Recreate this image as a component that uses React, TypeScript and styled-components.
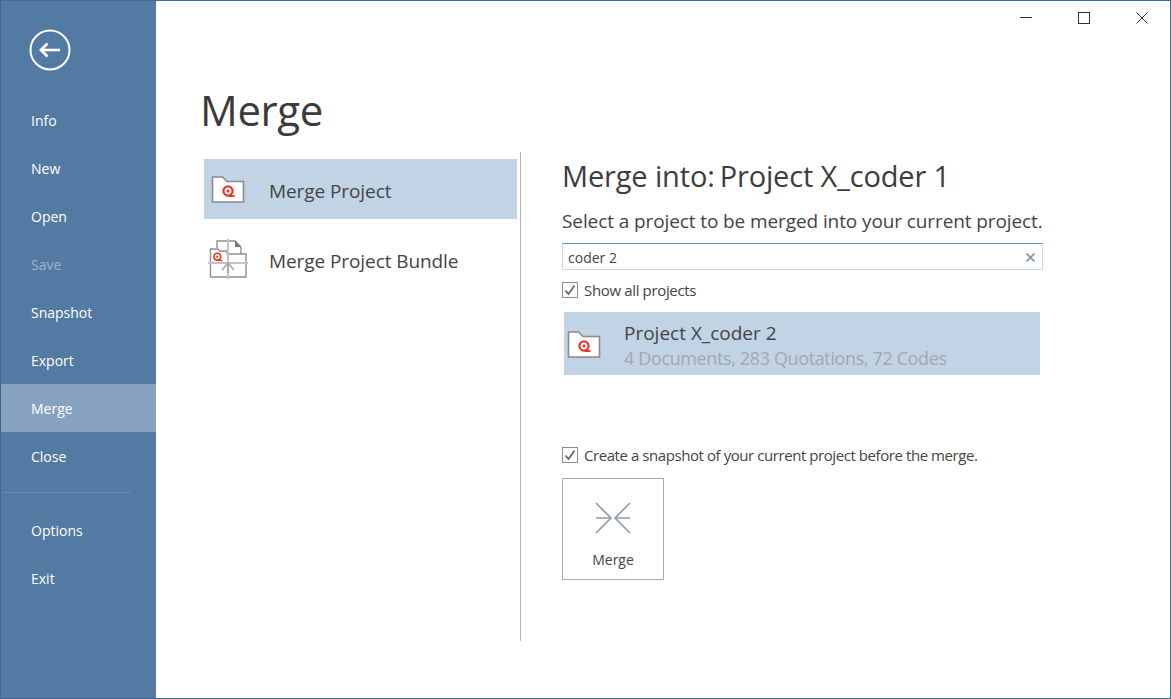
import React from 'react';
import styled, { createGlobalStyle } from 'styled-components';

const GlobalStyle = createGlobalStyle`
  html, body {
    margin: 0;
    padding: 0;
    background: #fff;
  }
  body {
    font-family: "Open Sans", "Noto Sans", sans-serif;
  }
`;

const Window = styled.div`
  box-sizing: border-box;
  width: 1171px;
  height: 699px;
  display: flex;
  border: 1px solid #41688f;
  overflow: hidden;
`;

const Sidebar = styled.nav`
  width: 155px;
  flex: none;
  background: #527aa3;
  display: flex;
  flex-direction: column;
`;

const BackButton = styled.div`
  height: 95px;
  padding-left: 28px;
  padding-top: 28px;
  box-sizing: border-box;
`;

const NavItem = styled.div<{ $active?: boolean; $disabled?: boolean }>`
  height: 48px;
  display: flex;
  align-items: center;
  padding-left: 30px;
  font-size: 14px;
  letter-spacing: 0;
  color: ${({ $disabled }) => ($disabled ? '#9db3cb' : '#fff')};
  background: ${({ $active }) => ($active ? '#87a2c0' : 'transparent')};
`;

const NavDivider = styled.div`
  width: 127px;
  height: 1px;
  margin: 12px 0 13px 2px;
  background: #6b8db1;
`;

const Main = styled.main`
  flex: 1;
  display: flex;
  flex-direction: column;
  min-width: 0;
`;

const TitleBar = styled.div`
  height: 36px;
  display: flex;
  justify-content: flex-end;
`;

const WindowButton = styled.div`
  box-sizing: border-box;
  width: 58px;
  height: 34px;
  padding-left: 2px;
  display: flex;
  align-items: center;
  justify-content: center;
`;

const PageTitle = styled.h1`
  margin: 46px 0 0 44px;
  font-size: 42px;
  line-height: 54px;
  font-weight: 400;
  letter-spacing: -0.4px;
  color: #3b3b3b;
`;

const Columns = styled.div`
  display: flex;
  margin: 15px 0 0 48px;
`;

const LeftColumn = styled.div`
  width: 313px;
  padding-top: 7px;
  display: flex;
  flex-direction: column;
  gap: 10px;
`;

const MergeOption = styled.div<{ $active?: boolean }>`
  height: 60px;
  display: flex;
  align-items: center;
  gap: 21px;
  padding-left: 4px;
  font-size: 19px;
  letter-spacing: -0.08px;
  color: #444;
  background: ${({ $active }) => ($active ? '#c2d3e6' : 'transparent')};
`;

const OptionLabel = styled.span`
  padding-top: 4px;
`;

const IconSlot = styled.div`
  width: 40px;
  display: flex;
  justify-content: center;
  flex: none;
`;

const VerticalRule = styled.div`
  width: 1px;
  height: 489px;
  margin-left: 3px;
  background: #b5b5b5;
  flex: none;
`;

const RightColumn = styled.div`
  margin-left: 41px;
  width: 481px;
  display: flex;
  flex-direction: column;
`;

const MergeHeading = styled.h2`
  margin: 5px 0 0;
  display: flex;
  gap: 5px;
  font-size: 29px;
  line-height: 38px;
  font-weight: 400;
  letter-spacing: -0.15px;
  color: #3d3d3d;
`;

const Subheading = styled.div`
  margin-top: 13px;
  font-size: 19px;
  line-height: 26px;
  letter-spacing: -0.1px;
  color: #444;
`;

const SearchBox = styled.div`
  box-sizing: border-box;
  margin-top: 9px;
  height: 27px;
  display: flex;
  align-items: center;
  justify-content: space-between;
  padding: 2px 7px 0 5px;
  border: 1px solid #c9dcec;
  border-top-color: #5a93c8;
  font-size: 14px;
  color: #444;
`;

const CheckRow = styled.div`
  display: flex;
  align-items: center;
  gap: 6px;
  font-size: 15px;
  line-height: 20px;
  letter-spacing: -0.35px;
  color: #444;
`;

const CheckBox = styled.div`
  box-sizing: border-box;
  width: 16px;
  height: 16px;
  border: 1px solid #8d8d8d;
  display: flex;
  align-items: center;
  justify-content: center;
`;

const ShowAllRow = styled(CheckRow)`
  margin-top: 10px;
`;

const SnapshotRow = styled(CheckRow)`
  margin-top: 70px;
  letter-spacing: -0.43px;
`;

const ProjectRow = styled.div`
  box-sizing: border-box;
  margin: 12px 3px 0 2px;
  width: 476px;
  height: 63px;
  background: #c2d3e6;
  display: flex;
  align-items: center;
  gap: 20px;
`;

const ProjectText = styled.div`
  display: flex;
  flex-direction: column;
  padding-top: 4px;
`;

const ProjectName = styled.div`
  font-size: 19px;
  line-height: 25px;
  color: #444;
`;

const ProjectMeta = styled.div`
  font-size: 18px;
  line-height: 25px;
  letter-spacing: -0.37px;
  color: #a3a8ae;
`;

const MergeButton = styled.div`
  box-sizing: border-box;
  margin-top: 13px;
  width: 102px;
  height: 102px;
  border: 1px solid #ababab;
  display: flex;
  flex-direction: column;
  align-items: center;
  padding-top: 23px;
  gap: 16px;
  font-size: 14px;
  color: #444;
`;

const BackIcon = () => (
  <svg width="42" height="42" viewBox="0 0 42 42" fill="none" stroke="#fff">
    <circle cx="21" cy="21" r="19.5" strokeWidth="2" />
    <path d="M12 21H31" strokeWidth="2.6" />
    <path d="M18.5 14.5L12 21L18.5 27.5" strokeWidth="2.8" />
  </svg>
);

const Check = () => (
  <svg width="12" height="12" viewBox="0 0 12 12" fill="none" stroke="#666" strokeWidth="1.7">
    <path d="M1.5 6.5L4.5 10L10.5 1.5" />
  </svg>
);

const Spiral = ({ x, y, scale = 1 }: { x: number; y: number; scale?: number }) => (
  <g transform={`translate(${x} ${y}) scale(${scale})`} fill="none" stroke="#e5392d">
    <circle cx="0" cy="0" r="4.6" strokeWidth="2.2" />
    <circle cx="0" cy="0" r="1.2" fill="#e5392d" strokeWidth="0.8" />
    <path d="M0.5 5H6.5" strokeWidth="2" />
  </g>
);

const FolderIcon = () => (
  <svg width="34" height="28" viewBox="0 0 34 28">
    <path
      d="M1.5 2H11.5L16 6.5H32.5V27H1.5Z"
      fill="#fff"
      stroke="#8a8a8a"
      strokeWidth="1.6"
    />
    <Spiral x={17} y={16} />
  </svg>
);

const BundleIcon = () => (
  <svg width="40" height="40" viewBox="0 0 40 40" fill="none">
    <path d="M9 9V2H27L33 8V15" fill="#fff" stroke="#8f8f8f" strokeWidth="1.4" />
    <path d="M27 1.5L33 8H27Z" fill="#777" />
    <path d="M2.5 10H10L12 12H19V30H2.5Z" fill="#fff" stroke="#8f8f8f" strokeWidth="1.4" />
    <path d="M19 15H38V38H2.5V30" fill="#fff" stroke="#8f8f8f" strokeWidth="1.4" />
    <Spiral x={9.3} y={17.7} scale={0.75} />
    <path d="M20 0V40M0 24H40" stroke="#c4c4c4" strokeWidth="2.2" />
    <path d="M14 31L20 24L26 31M20 24V34" stroke="#a8a8a8" strokeWidth="1.6" />
  </svg>
);

const MergeIcon = () => (
  <svg width="36" height="32" viewBox="0 0 36 32" fill="none" stroke="#8e9aa5" strokeWidth="1.6">
    <path d="M1 1L16 16L1 31" />
    <path d="M35 1L20 16L35 31" />
    <path d="M1 16H16M20 16H35" />
  </svg>
);

const navTop = ['Info', 'New', 'Open', 'Save', 'Snapshot', 'Export', 'Merge', 'Close'];

export default function App() {
  return (
    <>
      <GlobalStyle />
      <Window>
        <Sidebar>
          <BackButton>
            <BackIcon />
          </BackButton>
          {navTop.map((label) => (
            <NavItem key={label} $active={label === 'Merge'} $disabled={label === 'Save'}>
              {label}
            </NavItem>
          ))}
          <NavDivider />
          <NavItem>Options</NavItem>
          <NavItem>Exit</NavItem>
        </Sidebar>
        <Main>
          <TitleBar>
            <WindowButton>
              <svg width="12" height="12" viewBox="0 0 12 12" stroke="#333">
                <path d="M0 5.5H12" />
              </svg>
            </WindowButton>
            <WindowButton>
              <svg width="12" height="12" viewBox="0 0 12 12" fill="none" stroke="#333">
                <rect x="0.5" y="0.5" width="11" height="11" />
              </svg>
            </WindowButton>
            <WindowButton>
              <svg width="12" height="12" viewBox="0 0 12 12" stroke="#333">
                <path d="M0.5 0.5L11.5 11.5M11.5 0.5L0.5 11.5" />
              </svg>
            </WindowButton>
          </TitleBar>
          <PageTitle>Merge</PageTitle>
          <Columns>
            <LeftColumn>
              <MergeOption $active>
                <IconSlot>
                  <FolderIcon />
                </IconSlot>
                <OptionLabel>Merge Project</OptionLabel>
              </MergeOption>
              <MergeOption>
                <IconSlot>
                  <BundleIcon />
                </IconSlot>
                <OptionLabel>Merge Project Bundle</OptionLabel>
              </MergeOption>
            </LeftColumn>
            <VerticalRule />
            <RightColumn>
              <MergeHeading>
                <span>Merge into:</span>
                <span>Project X_coder 1</span>
              </MergeHeading>
              <Subheading>Select a project to be merged into your current project.</Subheading>
              <SearchBox>
                coder 2
                <svg width="9" height="9" viewBox="0 0 9 9" stroke="#7f99b3" strokeWidth="1.8">
                  <path d="M0.5 0.5L8.5 8.5M8.5 0.5L0.5 8.5" />
                </svg>
              </SearchBox>
              <ShowAllRow>
                <CheckBox>
                  <Check />
                </CheckBox>
                Show all projects
              </ShowAllRow>
              <ProjectRow>
                <IconSlot>
                  <FolderIcon />
                </IconSlot>
                <ProjectText>
                  <ProjectName>Project X_coder 2</ProjectName>
                  <ProjectMeta>4 Documents, 283 Quotations, 72 Codes</ProjectMeta>
                </ProjectText>
              </ProjectRow>
              <SnapshotRow>
                <CheckBox>
                  <Check />
                </CheckBox>
                Create a snapshot of your current project before the merge.
              </SnapshotRow>
              <MergeButton>
                <MergeIcon />
                Merge
              </MergeButton>
            </RightColumn>
          </Columns>
        </Main>
      </Window>
    </>
  );
}
